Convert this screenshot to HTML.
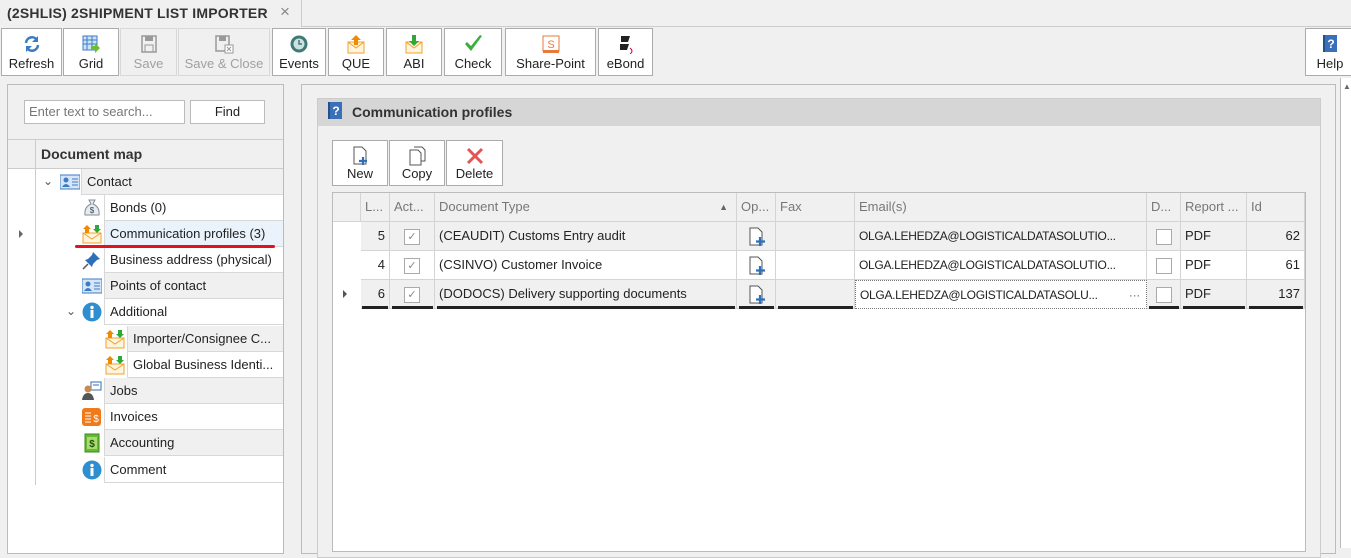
<!DOCTYPE html>
<html><head><meta charset="utf-8"><style>
*{box-sizing:border-box;margin:0;padding:0}
body{width:1351px;height:536px;overflow:hidden;background:#f0f0f0;font-family:"Liberation Sans",sans-serif;font-size:13px;color:#222;position:relative}
.a{position:absolute}
.btn{position:absolute;top:28px;height:48px;background:#fff;border:1px solid #ababab;text-align:center;font-size:13px}
.btn .ic{position:absolute;left:50%;top:5px;transform:translateX(-50%);width:20px;height:20px}
.btn .lb{position:absolute;left:0;right:0;bottom:4px;white-space:nowrap}
.dis{background:#f0f0f0;color:#a0a0a0;border-color:#d8d8d8}
.row{position:absolute;height:26px;line-height:25px;border-bottom:1px solid #d8d8d8;border-left:1px solid #d8d8d8;padding-left:5px;white-space:nowrap;overflow:hidden}
.g{background:#f0f0f0}.w{background:#fff}
.ti{position:absolute;width:20px;height:20px}
.gc{position:absolute;border-right:1px solid #d4d4d4;border-bottom:1px solid #d4d4d4;height:29px;line-height:28px;padding:0 4px;white-space:nowrap;overflow:hidden;font-size:13px}
.em{font-size:12px;letter-spacing:-0.3px}
.hd{color:#777;background:#f0f0f0}
.cb{display:inline-block;width:16px;height:16px;border:1px solid #aaa;background:#fff;vertical-align:middle;text-align:center;line-height:14px;font-size:11px;color:#888}
.ul{position:absolute;height:3px;background:#222}
</style></head><body>
<!-- tab -->
<div class="a" style="left:0;top:0;width:302px;height:27px;background:#f0f0f0;border-right:1px solid #ccc"></div>
<div class="a" style="left:302px;top:26px;width:1049px;height:1px;background:#ccc"></div>
<div class="a" style="left:7px;top:5px;font-weight:bold;font-size:14px;color:#333;letter-spacing:0.2px">(2SHLIS) 2SHIPMENT LIST IMPORTER</div>
<div class="a" style="left:280px;top:2px;font-size:17px;color:#888">×</div>

<!-- toolbar -->
<div class="btn" style="left:1px;width:61px"><svg class="ic" viewBox="0 0 20 20"><path d="M4 9a6 6 0 0 1 11-3" stroke="#3b7cc4" stroke-width="2.5" fill="none"/><path d="M16 2v6h-6z" fill="#3b7cc4"/><path d="M16 11a6 6 0 0 1-11 3" stroke="#3b7cc4" stroke-width="2.5" fill="none"/><path d="M4 18v-6h6z" fill="#3b7cc4"/></svg><div class="lb">Refresh</div></div>
<div class="btn" style="left:63px;width:56px"><svg class="ic" viewBox="0 0 20 20"><rect x="2" y="2" width="14" height="14" fill="#cfe3f7" stroke="#3b7cc4"/><path d="M2 6h14M2 10h14M6 2v14M11 2v14" stroke="#3b7cc4"/><path d="M10 12h4v-3l5 5-5 5v-3h-4z" fill="#6cbf2a"/></svg><div class="lb">Grid</div></div>
<div class="btn dis" style="left:120px;width:57px"><svg class="ic" viewBox="0 0 20 20"><rect x="3" y="2" width="14" height="16" fill="none" stroke="#999" stroke-width="1.5"/><rect x="6" y="2" width="8" height="5" fill="#999"/><rect x="6" y="11" width="8" height="7" fill="none" stroke="#999"/></svg><div class="lb">Save</div></div>
<div class="btn dis" style="left:178px;width:92px"><svg class="ic" viewBox="0 0 20 20"><rect x="2" y="2" width="13" height="15" fill="none" stroke="#999" stroke-width="1.5"/><rect x="5" y="2" width="7" height="5" fill="#999"/><rect x="11" y="11" width="8" height="8" fill="#fff" stroke="#999"/><path d="M13 13l4 4M17 13l-4 4" stroke="#999"/></svg><div class="lb">Save &amp; Close</div></div>
<div class="btn" style="left:272px;width:54px"><svg class="ic" viewBox="0 0 20 20"><circle cx="10" cy="10" r="8.5" fill="#3d7a78"/><circle cx="10" cy="10" r="5.5" fill="#cfe0e0"/><path d="M10 6v4h3" stroke="#3d7a78" stroke-width="1.5" fill="none"/></svg><div class="lb">Events</div></div>
<div class="btn" style="left:328px;width:56px"><svg class="ic" viewBox="0 0 20 20"><rect x="2" y="8" width="16" height="11" fill="#fff4dc" stroke="#f0a030"/><path d="M2 8l8 6 8-6" stroke="#f0a030" fill="none"/><path d="M10 1l5 5h-3v5h-4v-5h-3z" fill="#f08a00"/></svg><div class="lb">QUE</div></div>
<div class="btn" style="left:386px;width:56px"><svg class="ic" viewBox="0 0 20 20"><rect x="2" y="8" width="16" height="11" fill="#fff4dc" stroke="#f0a030"/><path d="M2 8l8 6 8-6" stroke="#f0a030" fill="none"/><path d="M10 12l5-5h-3v-6h-4v6h-3z" fill="#2ea836"/></svg><div class="lb">ABI</div></div>
<div class="btn" style="left:444px;width:58px"><svg class="ic" viewBox="0 0 20 20"><path d="M2 10l6 7 11-15-2-1-9 11-4-4z" fill="#3cae3c"/></svg><div class="lb">Check</div></div>
<div class="btn" style="left:505px;width:91px"><svg class="ic" viewBox="0 0 20 20"><rect x="2" y="2" width="16" height="15" fill="#fff" stroke="#e87a3a"/><rect x="2" y="16" width="16" height="3" fill="#e87a3a"/><text x="10" y="14" font-size="11" text-anchor="middle" fill="#e87a3a" font-family="Liberation Sans">S</text></svg><div class="lb">Share-Point</div></div>
<div class="btn" style="left:598px;width:55px"><svg class="ic" viewBox="0 0 20 20"><path d="M5 2h9l-2 6h-7zM4 10h9l-2 6h-7z" fill="#222"/><path d="M14 14q4 3 0 6" stroke="#c03" fill="none"/></svg><div class="lb">eBond</div></div>
<div class="btn" style="left:1305px;width:50px"><svg class="ic" viewBox="0 0 20 20"><rect x="3" y="1" width="14" height="17" fill="#3a70b8"/><rect x="3" y="1" width="2" height="17" fill="#234f8c"/><text x="11" y="14" font-size="12" font-weight="bold" text-anchor="middle" fill="#fff" font-family="Liberation Sans">?</text></svg><div class="lb">Help</div></div>

<!-- left panel -->
<div class="a" style="left:7px;top:84px;width:277px;height:470px;border:1px solid #bbb;background:#fff"></div>
<div class="a" style="left:8px;top:85px;width:275px;height:55px;background:#f0f0f0;border-bottom:1px solid #ccc"></div>
<div class="a" style="left:24px;top:100px;width:161px;height:24px;border:1px solid #bbb;background:#fff;color:#777;padding:3px 4px;font-size:13px">Enter text to search...</div>
<div class="a" style="left:190px;top:100px;width:75px;height:24px;border:1px solid #bbb;background:#fff;text-align:center;line-height:22px">Find</div>
<div class="a" style="left:8px;top:140px;width:275px;height:29px;background:#f0f0f0;border-bottom:1px solid #ccc"></div>
<div class="a" style="left:35px;top:140px;width:1px;height:345px;background:#ccc"></div>
<div class="a" style="left:41px;top:146px;font-weight:bold;font-size:14px;color:#333">Document map</div>
<div class="a" style="left:19px;top:230px;width:0;height:0;border-left:4px solid #666;border-top:4px solid transparent;border-bottom:4px solid transparent"></div>
<div class="a" style="left:43px;top:174px;font-size:12px;color:#555">⌄</div>
<div class="a" style="left:66px;top:304px;font-size:12px;color:#555">⌄</div>

<div class="row g" style="left:81px;top:169px;width:202px">Contact</div>
<div class="row w" style="left:104px;top:195px;width:179px">Bonds (0)</div>
<div class="row" style="left:104px;top:221px;width:179px;background:#eaf2fb">Communication profiles (3)</div>
<div class="row w" style="left:104px;top:247px;width:179px">Business address (physical)</div>
<div class="row g" style="left:104px;top:273px;width:179px">Points of contact</div>
<div class="row w" style="left:104px;top:299px;width:179px">Additional</div>
<div class="row g" style="left:127px;top:326px;width:156px">Importer/Consignee C...</div>
<div class="row w" style="left:127px;top:352px;width:156px">Global Business Identi...</div>
<div class="row g" style="left:104px;top:378px;width:179px">Jobs</div>
<div class="row w" style="left:104px;top:404px;width:179px">Invoices</div>
<div class="row g" style="left:104px;top:430px;width:179px">Accounting</div>
<div class="row w" style="left:104px;top:457px;width:179px">Comment</div>
<div class="a" style="left:75px;top:245px;width:200px;height:3px;background:#e0141e;border-radius:2px"></div>

<!-- tree icons -->
<svg class="ti" style="left:60px;top:172px" viewBox="0 0 20 20"><rect x="0" y="3" width="20" height="14" fill="#d6e6f8" stroke="#3b7cc4"/><circle cx="6" cy="8" r="2.5" fill="#3b7cc4"/><path d="M2 15q4-6 8 0z" fill="#3b7cc4"/><path d="M12 7h6M12 10h6M12 13h6" stroke="#3b7cc4"/></svg>
<svg class="ti" style="left:82px;top:198px" viewBox="0 0 20 20"><path d="M7 2h6l-2 4q7 3 6 11H3q-1-8 6-11z" fill="#e6ecf0" stroke="#889"/><text x="10" y="15" font-size="8" text-anchor="middle" fill="#345">$</text></svg>
<svg class="ti" style="left:82px;top:224px" viewBox="0 0 20 20"><rect x="1" y="9" width="18" height="10" fill="#fff4dc" stroke="#f0a030"/><path d="M1 9l9 6 9-6" stroke="#f0a030" fill="none"/><path d="M5 1l4 4h-2v4h-4v-4h-2z" fill="#f08a00"/><path d="M15 9l4-4h-2v-4h-4v4h-2z" fill="#2ea836"/></svg>
<svg class="ti" style="left:82px;top:250px" viewBox="0 0 20 20"><path d="M11 2l7 7-3 1-4 4-1 3-7-7 3-1 4-4z" fill="#2d6fb8"/><path d="M6 14l-5 5" stroke="#556" stroke-width="1.5"/></svg>
<svg class="ti" style="left:82px;top:276px" viewBox="0 0 20 20"><rect x="0" y="3" width="20" height="14" fill="#d6e6f8" stroke="#3b7cc4"/><circle cx="6" cy="8" r="2.5" fill="#3b7cc4"/><path d="M2 15q4-6 8 0z" fill="#3b7cc4"/><path d="M12 7h6M12 10h6M12 13h6" stroke="#3b7cc4"/></svg>
<svg class="ti" style="left:82px;top:302px" viewBox="0 0 20 20"><circle cx="10" cy="10" r="9.5" fill="#2e8fd0"/><rect x="8.5" y="8" width="3" height="8" fill="#fff"/><circle cx="10" cy="5.5" r="1.7" fill="#fff"/></svg>
<svg class="ti" style="left:105px;top:329px" viewBox="0 0 20 20"><rect x="1" y="9" width="18" height="10" fill="#fff4dc" stroke="#f0a030"/><path d="M1 9l9 6 9-6" stroke="#f0a030" fill="none"/><path d="M5 1l4 4h-2v4h-4v-4h-2z" fill="#f08a00"/><path d="M15 9l4-4h-2v-4h-4v4h-2z" fill="#2ea836"/></svg>
<svg class="ti" style="left:105px;top:355px" viewBox="0 0 20 20"><rect x="1" y="9" width="18" height="10" fill="#fff4dc" stroke="#f0a030"/><path d="M1 9l9 6 9-6" stroke="#f0a030" fill="none"/><path d="M5 1l4 4h-2v4h-4v-4h-2z" fill="#f08a00"/><path d="M15 9l4-4h-2v-4h-4v4h-2z" fill="#2ea836"/></svg>
<svg class="ti" style="left:82px;top:381px" viewBox="0 0 20 20"><rect x="9" y="1" width="10" height="8" fill="#fff" stroke="#2e6fb8"/><path d="M11 4h6" stroke="#2e6fb8"/><circle cx="6" cy="8" r="3.5" fill="#c98a50"/><path d="M0 19q1-7 6-7t6 7z" fill="#555"/></svg>
<svg class="ti" style="left:82px;top:407px" viewBox="0 0 20 20"><rect x="0" y="1" width="19" height="18" rx="3" fill="#f07a1a"/><path d="M3 6h6M3 9h6M3 12h6M3 15h6" stroke="#fff"/><text x="14" y="15" font-size="10" text-anchor="middle" fill="#fff" font-family="Liberation Sans">$</text></svg>
<svg class="ti" style="left:82px;top:433px" viewBox="0 0 20 20"><rect x="3" y="1" width="14" height="18" fill="#6ab830" stroke="#3a8a20"/><rect x="5" y="4" width="10" height="12" fill="#a8dc70"/><text x="10" y="14" font-size="10" text-anchor="middle" fill="#205010" font-weight="bold" font-family="Liberation Sans">$</text></svg>
<svg class="ti" style="left:82px;top:460px" viewBox="0 0 20 20"><circle cx="10" cy="10" r="9.5" fill="#2e8fd0"/><rect x="8.5" y="8" width="3" height="8" fill="#fff"/><circle cx="10" cy="5.5" r="1.7" fill="#fff"/></svg>

<!-- right panel -->
<div class="a" style="left:301px;top:84px;width:1035px;height:470px;border:1px solid #bbb;background:#f0f0f0"></div>
<div class="a" style="left:317px;top:98px;width:1004px;height:460px;border:1px solid #ccc;background:#f0f0f0"></div>
<div class="a" style="left:318px;top:99px;width:1002px;height:27px;background:#d6d6d6"></div>
<svg class="a" style="left:327px;top:102px;width:16px;height:18px" viewBox="0 0 16 18"><rect x="1" y="0" width="14" height="17" fill="#3a70b8"/><rect x="1" y="0" width="2" height="17" fill="#234f8c"/><text x="9" y="13" font-size="12" font-weight="bold" text-anchor="middle" fill="#fff" font-family="Liberation Sans">?</text></svg>
<div class="a" style="left:352px;top:104px;font-weight:bold;font-size:14px;color:#333">Communication profiles</div>
<div class="a" style="left:1340px;top:78px;width:11px;height:470px;border-left:1px solid #bbb;background:#fff"></div>
<div class="a" style="left:1343px;top:82px;font-size:8px;color:#666">▲</div>

<!-- grid buttons -->
<div class="btn" style="left:332px;top:140px;width:56px;height:46px"><svg class="ic" viewBox="0 0 20 20"><path d="M4 1h8l4 4v13H4z" fill="#fff" stroke="#555"/><path d="M13 11v8M9 15h8" stroke="#2e6fb8" stroke-width="2.2"/></svg><div class="lb">New</div></div>
<div class="btn" style="left:389px;top:140px;width:56px;height:46px"><svg class="ic" viewBox="0 0 20 20"><path d="M3 4h8l3 3v12H3z" fill="#fff" stroke="#555"/><path d="M7 1h8l3 3v11h-4" fill="none" stroke="#555"/></svg><div class="lb">Copy</div></div>
<div class="btn" style="left:446px;top:140px;width:57px;height:46px"><svg class="ic" viewBox="0 0 20 20"><path d="M3 3l14 14M17 3L3 17" stroke="#e35555" stroke-width="3"/></svg><div class="lb">Delete</div></div>

<!-- grid -->
<div class="a" style="left:332px;top:192px;width:974px;height:360px;border:1px solid #bbb;background:#fff"></div>
<div class="a" style="left:333px;top:193px;width:972px;height:29px;background:#f0f0f0"></div>
<div class="gc hd" style="left:333px;top:193px;width:28px"></div>
<div class="gc hd" style="left:361px;top:193px;width:29px">L...</div>
<div class="gc hd" style="left:390px;top:193px;width:45px">Act...</div>
<div class="gc hd" style="left:435px;top:193px;width:302px">Document Type<span style="position:absolute;right:8px;font-size:9px;color:#666">▲</span></div>
<div class="gc hd" style="left:737px;top:193px;width:39px">Op...</div>
<div class="gc hd" style="left:776px;top:193px;width:79px">Fax</div>
<div class="gc hd" style="left:855px;top:193px;width:292px">Email(s)</div>
<div class="gc hd" style="left:1147px;top:193px;width:34px">D...</div>
<div class="gc hd" style="left:1181px;top:193px;width:66px">Report ...</div>
<div class="gc hd" style="left:1247px;top:193px;width:58px">Id</div>

<!-- rows -->
<div class="a" style="left:361px;top:222px;width:944px;height:29px;background:#f0f0f0"></div>
<div class="a" style="left:361px;top:280px;width:944px;height:29px;background:#f0f0f0"></div>

<div class="gc" style="left:361px;top:222px;width:29px;text-align:right">5</div>
<div class="gc" style="left:390px;top:222px;width:45px;text-align:center"><span class="cb">✓</span></div>
<div class="gc" style="left:435px;top:222px;width:302px">(CEAUDIT) Customs Entry audit</div>
<div class="gc" style="left:737px;top:222px;width:39px"></div>
<div class="gc" style="left:776px;top:222px;width:79px"></div>
<div class="gc em" style="left:855px;top:222px;width:292px">OLGA.LEHEDZA@LOGISTICALDATASOLUTIO...</div>
<div class="gc" style="left:1147px;top:222px;width:34px;text-align:center"><span class="cb"></span></div>
<div class="gc" style="left:1181px;top:222px;width:66px">PDF</div>
<div class="gc" style="left:1247px;top:222px;width:58px;text-align:right">62</div>

<div class="gc" style="left:361px;top:251px;width:29px;text-align:right">4</div>
<div class="gc" style="left:390px;top:251px;width:45px;text-align:center"><span class="cb">✓</span></div>
<div class="gc" style="left:435px;top:251px;width:302px">(CSINVO) Customer Invoice</div>
<div class="gc" style="left:737px;top:251px;width:39px"></div>
<div class="gc" style="left:776px;top:251px;width:79px"></div>
<div class="gc em" style="left:855px;top:251px;width:292px">OLGA.LEHEDZA@LOGISTICALDATASOLUTIO...</div>
<div class="gc" style="left:1147px;top:251px;width:34px;text-align:center"><span class="cb"></span></div>
<div class="gc" style="left:1181px;top:251px;width:66px">PDF</div>
<div class="gc" style="left:1247px;top:251px;width:58px;text-align:right">61</div>

<div class="gc" style="left:361px;top:280px;width:29px;text-align:right">6</div>
<div class="gc" style="left:390px;top:280px;width:45px;text-align:center"><span class="cb">✓</span></div>
<div class="gc" style="left:435px;top:280px;width:302px">(DODOCS) Delivery supporting documents</div>
<div class="gc" style="left:737px;top:280px;width:39px"></div>
<div class="gc" style="left:776px;top:280px;width:79px"></div>
<div class="gc em" style="left:855px;top:280px;width:292px;background:#fff;border:1px dotted #777">OLGA.LEHEDZA@LOGISTICALDATASOLU...<span style="position:absolute;right:6px;color:#666">···</span></div>
<div class="gc" style="left:1147px;top:280px;width:34px;text-align:center"><span class="cb"></span></div>
<div class="gc" style="left:1181px;top:280px;width:66px">PDF</div>
<div class="gc" style="left:1247px;top:280px;width:58px;text-align:right">137</div>
<div class="a" style="left:343px;top:290px;width:0;height:0;border-left:4px solid #555;border-top:4px solid transparent;border-bottom:4px solid transparent"></div>

<!-- op icons -->
<svg class="a" style="left:748px;top:227px;width:18px;height:20px" viewBox="0 0 18 20"><path d="M2 1h8l4 4v13H2z" fill="#fff" stroke="#555"/><path d="M12 10v9M8 14.5h9" stroke="#2e6fb8" stroke-width="2.2"/></svg>
<svg class="a" style="left:748px;top:256px;width:18px;height:20px" viewBox="0 0 18 20"><path d="M2 1h8l4 4v13H2z" fill="#fff" stroke="#555"/><path d="M12 10v9M8 14.5h9" stroke="#2e6fb8" stroke-width="2.2"/></svg>
<svg class="a" style="left:748px;top:285px;width:18px;height:20px" viewBox="0 0 18 20"><path d="M2 1h8l4 4v13H2z" fill="#fff" stroke="#555"/><path d="M12 10v9M8 14.5h9" stroke="#2e6fb8" stroke-width="2.2"/></svg>

<!-- focused row underlines -->
<div class="ul" style="left:362px;top:306px;width:26px"></div>
<div class="ul" style="left:392px;top:306px;width:41px"></div>
<div class="ul" style="left:437px;top:306px;width:298px"></div>
<div class="ul" style="left:739px;top:306px;width:35px"></div>
<div class="ul" style="left:778px;top:306px;width:75px"></div>
<div class="ul" style="left:1149px;top:306px;width:30px"></div>
<div class="ul" style="left:1183px;top:306px;width:62px"></div>
<div class="ul" style="left:1249px;top:306px;width:54px"></div>
</body></html>
